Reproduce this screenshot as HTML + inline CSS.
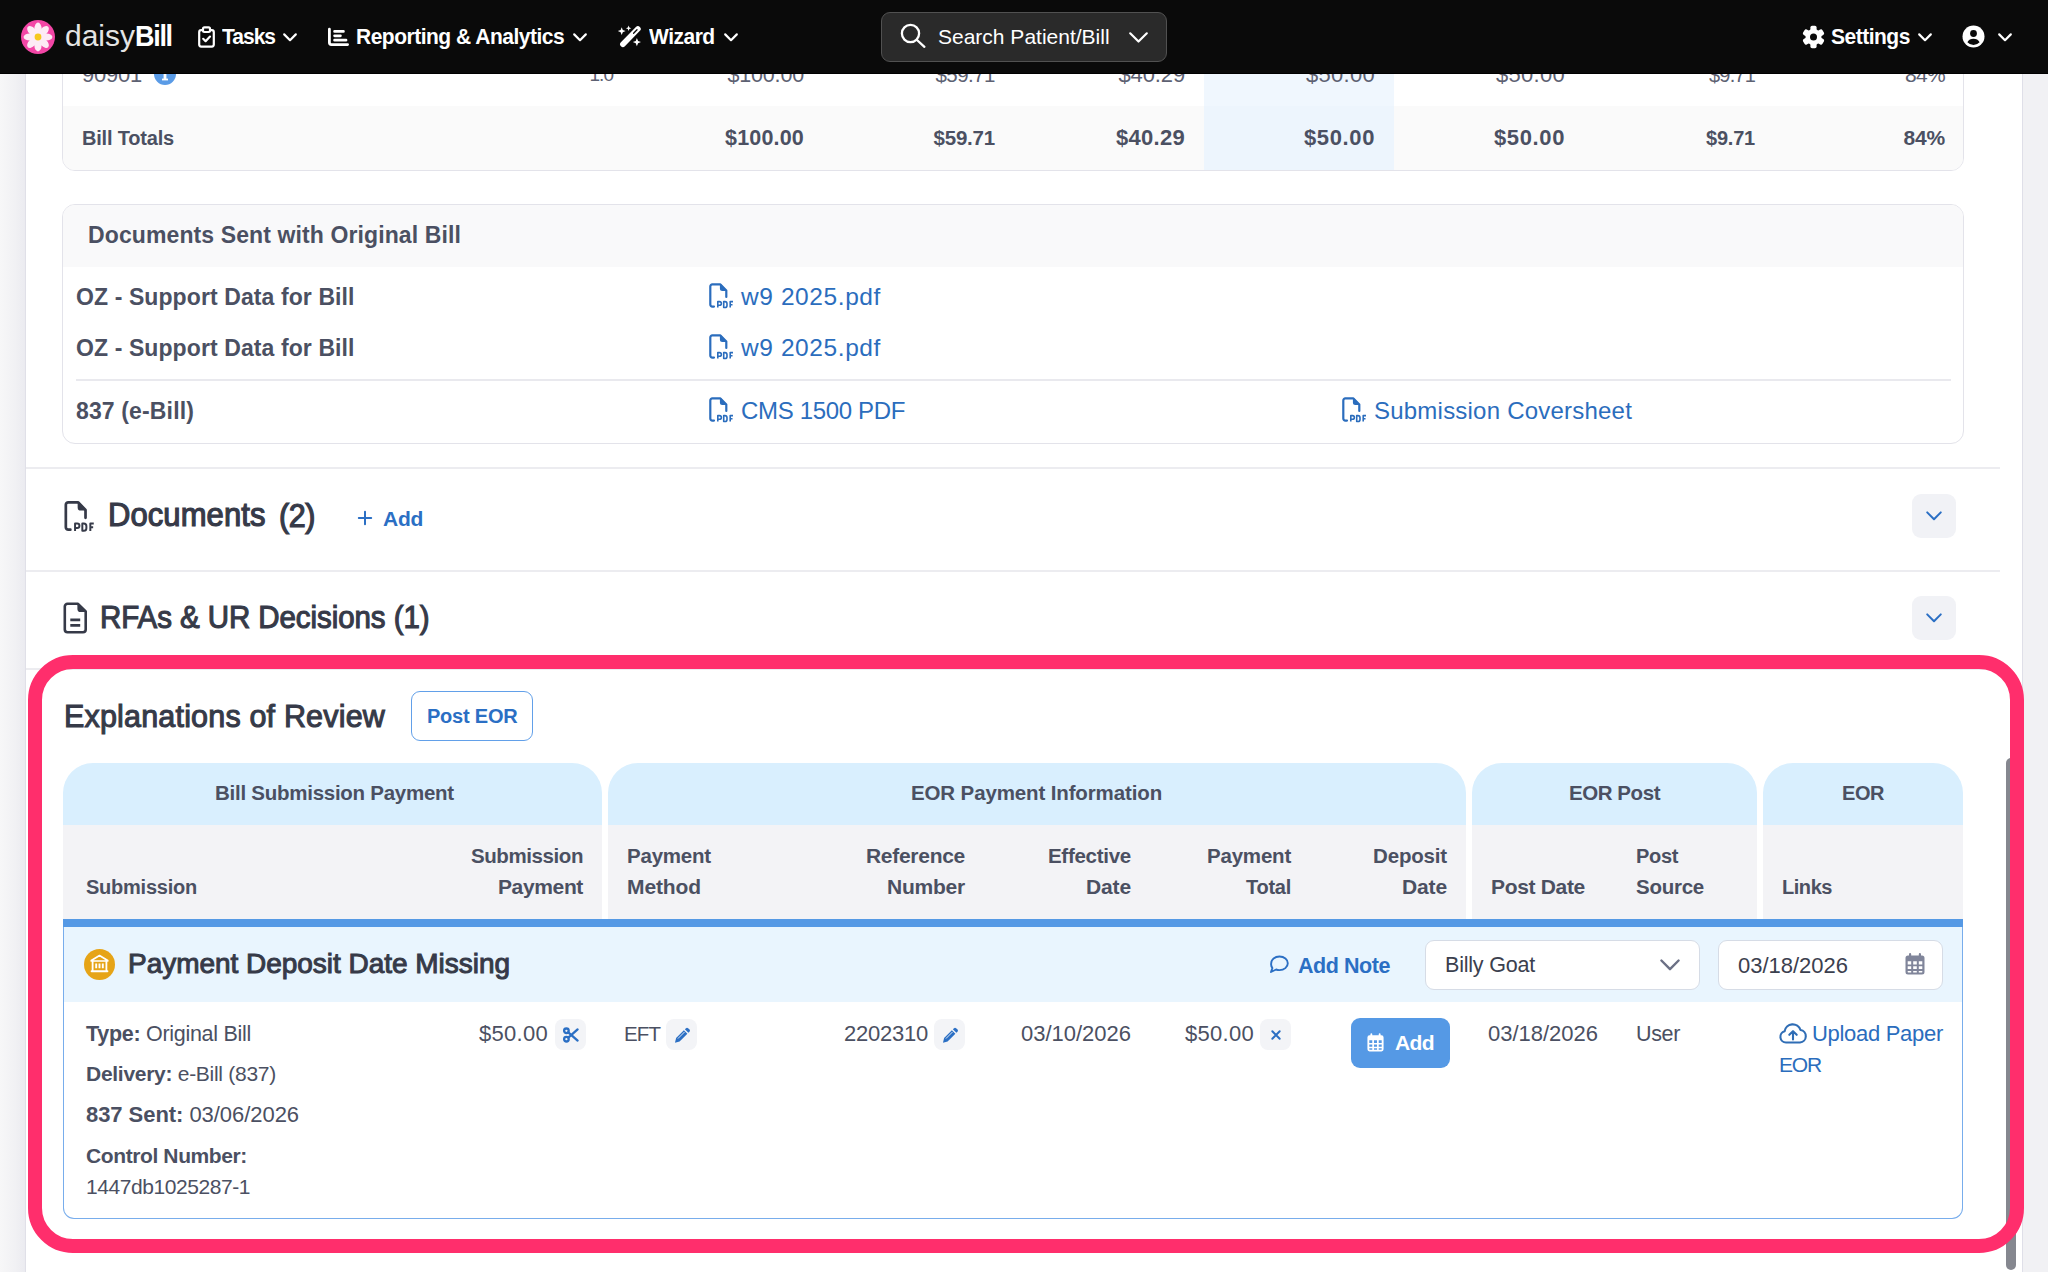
<!DOCTYPE html>
<html lang="en">
<head>
<meta charset="utf-8">
<title>daisyBill - Explanations of Review</title>
<style>
*{box-sizing:border-box;margin:0;padding:0}
html,body{width:2048px;height:1272px;overflow:hidden}
body{font-family:"Liberation Sans",sans-serif;background:#f2f2f5;position:relative;color:#4b5062}
.abs{position:absolute}
.t{position:absolute;white-space:nowrap;line-height:30px;height:30px}
.b{font-weight:bold}
.r{text-align:right}
svg{display:block;position:absolute;overflow:visible}

/* page strips */
#lstrip{left:0;top:73px;width:26px;height:1199px;background:linear-gradient(90deg,#f7f7f8 0,#f1f1f4 60%,#ebebf0 100%);border-right:1px solid #e0e0e8}
#rstrip{left:2022px;top:73px;width:26px;height:1199px;background:#f1f1f4;border-left:1px solid #dfdfe8}
#panel{left:26px;top:73px;width:1996px;height:1199px;background:#fff}

/* nav */
#nav{left:0;top:0;width:2048px;height:74px;background:#0a0a0a;border-bottom:1px solid #000}
#nav .t{color:#fff}
.nb{font-weight:bold;font-size:21px;letter-spacing:-.5px;transform:scaleY(1.07);transform-origin:50% 74%}

/* cards */
.card{position:absolute;left:62px;width:1902px;border:1px solid #e3e3ea;background:#fff;overflow:hidden}
.hline{position:absolute;height:2px;background:#ececf0}
.lnk{color:#2f6db5}
.chev{position:absolute;left:1912px;width:44px;height:44px;border-radius:9px;background:#f1f2f6}

.tb{font-weight:bold;font-size:21px;color:#4b5062}
.dh{font-weight:bold;font-size:23px;color:#4b5062}
.dl{font-weight:bold;font-size:23px;color:#4b5062}
.lk{font-size:24px;color:#2b6dbd}
.pdf{color:#2b6dbd}
.sh1{transform:scaleY(1.13);transform-origin:50% 62%;font-weight:normal;-webkit-text-stroke:1.15px #363a48;font-size:30px;color:#363a48;line-height:40px;height:40px}
.sh2{transform:scaleY(1.1);transform-origin:50% 62%;font-weight:normal;-webkit-text-stroke:1.05px #363a48;font-size:28px;color:#363a48;line-height:38px;height:38px}
.lk2{font-size:23px;color:#2b6dbd}
/* EOR */
.gh{position:absolute;top:763px;height:62px;background:#d9effe;border-radius:30px 30px 0 0}
.sh{position:absolute;top:825px;height:93.500px;background:#f3f3f6}
.th{font-weight:bold;font-size:21px;color:#4b5062}
.td{font-size:22px;color:#4b5062}
.ib{position:absolute;width:31px;height:31px;border-radius:8px;background:#f3f4f7}
</style>
</head>
<body>
<svg width="0" height="0" style="position:absolute"><defs>
<g id="pdfi" fill="none" stroke="currentColor" stroke-linecap="round" stroke-linejoin="round">
<path stroke-width="2.200" d="M6 24.600H4.300a2 2 0 0 1-2-2V4.400a2 2 0 0 1 2-2H12.400L18.300 8.600V15"/>
<path stroke-width="1.400" d="M12.600 2.800V6.600a1.800 1.800 0 0 0 1.800 1.800H17.800z" fill="currentColor"/>
<path stroke-width="1.600" d="M9.800 25.600V19.600H11.500a1.850 1.850 0 0 1 0 3.700H9.800M15.700 19.600V25.500H16.900a2.100 2.100 0 0 0 2.100-2.100V21.700a2.100 2.100 0 0 0-2.100-2.100zM22.200 25.600V19.600H25M22.200 22.700H24.500" stroke-linecap="butt"/>
</g>
<g id="cal" fill="currentColor"><path fill-rule="evenodd" d="M4 2.500V1.200a1.100 1.100 0 0 1 2.200 0V2.500H13.800V1.200a1.100 1.100 0 0 1 2.200 0V2.500H17a2.500 2.500 0 0 1 2.500 2.500V19A2.500 2.500 0 0 1 17 21.500H3A2.500 2.500 0 0 1 .5 19V5A2.500 2.500 0 0 1 3 2.500zM2.700 8.300v3.200h3.500V8.300zM8.200 8.300v3.200h3.600V8.300zM13.800 8.300v3.200h3.500V8.300zM2.700 13.300v2.800h3.500v-2.800zM8.200 13.300v2.800h3.600v-2.800zM13.800 13.300v2.800h3.500v-2.800zM2.700 17.900V19a.4.400 0 0 0 .4.400H6.200V17.900zM8.200 17.900v1.500h3.600V17.900zM13.800 17.900v1.500H17a.4.400 0 0 0 .3-.4V17.900z"/></g>
<g id="pen"><path fill="#2b6fc4" d="M9.900 3.300l3.500 3.500L5.600 14.600 1 15.700 2.100 11.100z"/><path fill="#2b6fc4" d="M10.900 2.300l1.100-1.100a1.500 1.500 0 0 1 2.100 0l1.400 1.400a1.500 1.500 0 0 1 0 2.100L14.400 5.800z"/><path d="M4.200 11.300L10.300 5.200" stroke="#f3f4f7" stroke-width=".9" stroke-linecap="round"/></g>
</defs></svg>
<div class="abs" id="panel"></div>
<div class="abs" id="lstrip"></div>
<div class="abs" id="rstrip"></div>

<!-- bill totals card -->
<div class="card" style="top:40px;height:131px;border-radius:0 0 13px 13px">
  <div class="abs" style="left:0;top:65px;width:1902px;height:65px;background:#fafafa"></div>
  <div class="abs" style="left:1141px;top:0;width:190px;height:65px;background:#f0f7fe"></div>
  <div class="abs" style="left:1141px;top:65px;width:190px;height:65px;background:#edf5fd"></div>
</div>
<!-- row 1 (partially hidden under nav) -->
<div class="t td" id="c_code" style="left:82px;top:60px;color:#5d6172;font-size:22px;letter-spacing:-0.24px">90901</div>
<svg style="left:154px;top:63px" width="22" height="22" viewBox="0 0 22 22"><circle cx="11" cy="11" r="11" fill="#5a9be6"/><rect x="9.600" y="9" width="2.800" height="7.500" fill="#fff"/><rect x="8" y="15.600" width="6" height="1.800" fill="#fff"/></svg>
<div class="t td r" id="c_r1a" style="right:1435px;top:60px;color:#5d6172;font-size:19px;letter-spacing:-0.97px">1.0</div>
<div class="t td r" id="c_r1b" style="right:1244px;top:60px;color:#5d6172;font-size:21.5px;letter-spacing:-0.17px">$100.00</div>
<div class="t td r" id="c_r1c" style="right:1053px;top:60px;color:#5d6172;font-size:20.5px;letter-spacing:-0.53px">$59.71</div>
<div class="t td r" id="c_r1d" style="right:863px;top:60px;color:#5d6172;font-size:22px;letter-spacing:-0.13px">$40.29</div>
<div class="t td r" id="c_r1e" style="right:673px;top:60px;color:#5d6172;font-size:22px;letter-spacing:0.28px">$50.00</div>
<div class="t td r" id="c_r1f" style="right:483px;top:60px;color:#5d6172;font-size:22px;letter-spacing:0.28px">$50.00</div>
<div class="t td r" id="c_r1g" style="right:293px;top:60px;color:#5d6172;font-size:20px;letter-spacing:-0.81px">$9.71</div>
<div class="t td r" id="c_r1h" style="right:103px;top:60px;color:#5d6172;font-size:21px;letter-spacing:-0.68px">84%</div>
<!-- row 2 -->
<div class="t tb" id="c_bt" style="left:82px;top:123px;font-size:20px;letter-spacing:-0.19px">Bill Totals</div>
<div class="t tb r" id="c_r2b" style="right:1244px;top:123px;font-size:21.5px;letter-spacing:0.18px">$100.00</div>
<div class="t tb r" id="c_r2c" style="right:1053px;top:123px;font-size:20.5px;letter-spacing:-0.2px">$59.71</div>
<div class="t tb r" id="c_r2d" style="right:863px;top:123px;font-size:22px;letter-spacing:0.28px">$40.29</div>
<div class="t tb r" id="c_r2e" style="right:673px;top:123px;font-size:22px;letter-spacing:0.62px">$50.00</div>
<div class="t tb r" id="c_r2f" style="right:483px;top:123px;font-size:22px;letter-spacing:0.62px">$50.00</div>
<div class="t tb r" id="c_r2g" style="right:293px;top:123px;font-size:20px;letter-spacing:-0.21px">$9.71</div>
<div class="t tb r" id="c_r2h" style="right:103px;top:123px;font-size:21px;letter-spacing:-0.18px">84%</div>

<!-- documents sent card -->
<div class="card" style="top:204px;height:240px;border-radius:13px">
  <div class="abs" style="left:0;top:0;width:1902px;height:62px;background:#f9f9fa"></div>
  <div class="abs" style="left:13px;top:174px;width:1875px;height:2px;background:#e9e9ee"></div>
</div>
<div class="t dh" id="d_h" style="left:88px;top:220px;font-size:23px;letter-spacing:0.11px">Documents Sent with Original Bill</div>
<div class="t dl" id="d_1" style="left:76px;top:282px;font-size:23px;letter-spacing:0.1px">OZ - Support Data for Bill</div>
<div class="t dl" id="d_2" style="left:76px;top:333px;font-size:23px;letter-spacing:0.1px">OZ - Support Data for Bill</div>
<div class="t dl" id="d_3" style="left:76px;top:396px;font-size:23px;letter-spacing:0.14px">837 (e-Bill)</div>
<svg class="pdf" style="left:708px;top:282px" width="26" height="27" viewBox="0 0 26 27"><use href="#pdfi"/></svg>
<svg class="pdf" style="left:708px;top:333px" width="26" height="27" viewBox="0 0 26 27"><use href="#pdfi"/></svg>
<svg class="pdf" style="left:708px;top:396px" width="26" height="27" viewBox="0 0 26 27"><use href="#pdfi"/></svg>
<svg class="pdf" style="left:1341px;top:396px" width="26" height="27" viewBox="0 0 26 27"><use href="#pdfi"/></svg>
<div class="t lk" id="d_l1" style="left:741px;top:282px;font-size:24.5px;letter-spacing:0.59px">w9 2025.pdf</div>
<div class="t lk" id="d_l2" style="left:741px;top:333px;font-size:24.5px;letter-spacing:0.59px">w9 2025.pdf</div>
<div class="t lk" id="d_l3" style="left:741px;top:396px;font-size:24px;letter-spacing:-0.34px">CMS 1500 PDF</div>
<div class="t lk" id="d_l4" style="left:1374px;top:396px;font-size:24px;letter-spacing:0.22px">Submission Coversheet</div>

<!--CARDS-->

<div class="hline" style="left:26px;top:467px;width:1974px"></div>
<svg style="left:63px;top:499px;color:#363a48" width="32" height="34" viewBox="0 0 26 27"><use href="#pdfi"/></svg>
<div class="t sh1" id="s_doc" style="left:108px;top:496px;font-size:31px;letter-spacing:0.08px;transform:scaleY(1.08)">Documents</div>
<div class="t sh1" id="s_doc2" style="left:279px;top:496px;font-size:30.5px;letter-spacing:-0.4px;transform:scaleY(1.08)">(2)</div>
<svg style="left:358px;top:511px" width="14" height="14" viewBox="0 0 14 14" stroke="#2b6fc4" stroke-width="2" stroke-linecap="round"><path d="M7 .8V13.200M.8 7H13.200"/></svg>
<div class="t b" id="s_add" style="left:383px;top:504px;color:#2b6fc4;font-size:21px;letter-spacing:-0.28px">Add</div>
<div class="chev" style="top:494px"><svg style="left:14px;top:17px" width="16" height="10" viewBox="0 0 16 10" fill="none" stroke="#2b6fc4" stroke-width="2" stroke-linecap="round" stroke-linejoin="round"><path d="M1.200 1.400L8 8.200l6.800-6.800"/></svg></div>

<div class="hline" style="left:26px;top:570px;width:1974px"></div>
<svg style="left:63px;top:602px" width="25" height="32" viewBox="0 0 25 32" fill="none" stroke="#363a48" stroke-width="2.600" stroke-linecap="round" stroke-linejoin="round">
  <path d="M15 1.800H4.500A2.700 2.700 0 0 0 1.800 4.500V27.500a2.700 2.700 0 0 0 2.700 2.700H20a2.700 2.700 0 0 0 2.700-2.700V9.500z"/>
  <path d="M15.200 2.200V7a2.300 2.300 0 0 0 2.300 2.300H22.300z" fill="#363a48" stroke-width="1.600"/>
  <path d="M7.300 17.800H17.200M7.300 23.300H17.200" stroke-width="2.800" stroke-linecap="butt"/>
</svg>
<div class="t sh2" id="s_rfa" style="left:100px;top:599px;font-size:29.5px;letter-spacing:-0.07px;transform:scaleY(1.04)">RFAs &amp; UR Decisions (1)</div>
<div class="chev" style="top:596px"><svg style="left:14px;top:17px" width="16" height="10" viewBox="0 0 16 10" fill="none" stroke="#2b6fc4" stroke-width="2" stroke-linecap="round" stroke-linejoin="round"><path d="M1.200 1.400L8 8.200l6.800-6.800"/></svg></div>
<div class="hline" style="left:26px;top:668px;width:1974px"></div>

<!--SECTIONS-->

<!-- scrollbar thumb -->
<div class="abs" style="left:2006px;top:758px;width:10px;height:512px;border-radius:5px;background:#85878f"></div>
<!-- pink highlight frame -->
<div class="abs" style="left:28px;top:655px;width:1996px;height:598px;border:14px solid #ff2e6c;border-radius:45px"></div>

<div class="t sh2" id="e_title" style="left:64px;top:697px;font-size:30.5px;letter-spacing:0.18px;transform:none">Explanations of Review</div>
<div class="abs" style="left:411px;top:691px;width:122px;height:50px;border:1.5px solid #62a0e9;border-radius:9px;background:#fff"></div>
<div class="t b" id="e_post" style="left:427px;top:701px;color:#2b6fc4;font-size:20px;letter-spacing:-0.22px">Post EOR</div>

<!-- group header -->
<div class="gh" style="left:63px;width:539px"></div>
<div class="gh" style="left:608px;width:858px"></div>
<div class="gh" style="left:1472px;width:285px"></div>
<div class="gh" style="left:1763px;width:200px"></div>
<div class="sh" style="left:63px;width:539px"></div>
<div class="sh" style="left:608px;width:858px"></div>
<div class="sh" style="left:1472px;width:285px"></div>
<div class="sh" style="left:1763px;width:200px"></div>
<div class="t th" id="g_1" style="left:215px;top:778px;font-size:20.5px;letter-spacing:-0.26px">Bill Submission Payment</div>
<div class="t th" id="g_2" style="left:911px;top:778px;font-size:20.5px;letter-spacing:-0.13px">EOR Payment Information</div>
<div class="t th" id="g_3" style="left:1569px;top:778px;font-size:20.5px;letter-spacing:-0.44px">EOR Post</div>
<div class="t th" id="g_4" style="left:1842px;top:778px;font-size:20px;letter-spacing:-0.45px">EOR</div>

<!-- sub header -->
<div class="t th" id="h_sub" style="left:86px;top:872px;font-size:20px;letter-spacing:-0.24px">Submission</div>
<div class="t th r" id="h_sp1" style="right:1465px;top:841px;font-size:20.5px;letter-spacing:-0.42px">Submission</div>
<div class="t th r" id="h_sp2" style="right:1465px;top:872px;font-size:21px;letter-spacing:-0.36px">Payment</div>
<div class="t th" id="h_pm1" style="left:627px;top:841px;font-size:20.5px;letter-spacing:-0.21px">Payment</div>
<div class="t th" id="h_pm2" style="left:627px;top:872px;font-size:21px;letter-spacing:-0.11px">Method</div>
<div class="t th r" id="h_rn1" style="right:1083px;top:841px;font-size:21px;letter-spacing:-0.28px">Reference</div>
<div class="t th r" id="h_rn2" style="right:1083px;top:872px;font-size:21px;letter-spacing:-0.23px">Number</div>
<div class="t th r" id="h_ed1" style="right:917px;top:841px;font-size:20.5px;letter-spacing:-0.27px">Effective</div>
<div class="t th r" id="h_ed2" style="right:917px;top:872px;font-size:21px;letter-spacing:-0.13px">Date</div>
<div class="t th r" id="h_pt1" style="right:757px;top:841px;font-size:20.5px;letter-spacing:-0.21px">Payment</div>
<div class="t th r" id="h_pt2" style="right:757px;top:872px;font-size:20px;letter-spacing:-0.26px">Total</div>
<div class="t th r" id="h_dd1" style="right:601px;top:841px;font-size:20.5px;letter-spacing:-0.17px">Deposit</div>
<div class="t th r" id="h_dd2" style="right:601px;top:872px;font-size:21px;letter-spacing:-0.13px">Date</div>
<div class="t th" id="h_pd" style="left:1491px;top:872px;font-size:21px;letter-spacing:-0.32px">Post Date</div>
<div class="t th" id="h_ps1" style="left:1636px;top:841px;font-size:20px;letter-spacing:-0.34px">Post</div>
<div class="t th" id="h_ps2" style="left:1636px;top:872px;font-size:20.5px;letter-spacing:-0.25px">Source</div>
<div class="t th" id="h_lk" style="left:1782px;top:872px;font-size:20px;letter-spacing:-0.45px">Links</div>

<!-- body -->
<div class="abs" style="left:63px;top:920px;width:1900px;height:299px;border:1px solid #78adec;border-top:none;border-radius:0 0 11px 11px;background:#fff"></div>
<div class="abs" style="left:64px;top:927px;width:1898px;height:75.400px;background:#e9f5fe"></div>
<div class="abs" style="left:63px;top:918.500px;width:1900px;height:8.500px;background:#5599e5"></div>

<!-- title row -->
<svg style="left:84px;top:949px" width="31" height="31" viewBox="0 0 31 31">
  <circle cx="15.500" cy="15.500" r="15.500" fill="#e6a417"/>
  <g fill="none" stroke="#fff" stroke-width="1.700" stroke-linejoin="round" stroke-linecap="round">
    <path d="M7.300 11.400L15.500 6.600l8.200 4.800v.6H7.300z"/>
    <path d="M8.600 12.600v8.600M22.400 12.600v8.600" stroke-width="1.800"/>
    <path d="M12.200 14.600v4.600M15.500 14.600v4.600M18.800 14.600v4.600" stroke-width="1.900" stroke-linecap="butt"/>
    <path d="M7.600 22.300H23.400" stroke-width="2"/>
  </g>
</svg>
<div class="t" id="r_title" style="-webkit-text-stroke:1px #363a48;left:128px;top:947px;color:#363a48;line-height:34px;height:34px;font-size:28px;letter-spacing:-0.03px;">Payment Deposit Date Missing</div>

<svg style="left:1269px;top:955px" width="20" height="19" viewBox="0 0 20 19" fill="none" stroke="#2b6fc4" stroke-width="1.900" stroke-linejoin="round"><path d="M10.500 1.500c4.700 0 8.300 3 8.300 6.800s-3.600 6.800-8.300 6.800a10 10 0 0 1-3.400-.6L2 17l1.400-4A6 6 0 0 1 2.200 8.300c0-3.800 3.600-6.800 8.300-6.800z"/></svg>
<div class="t b" id="r_note" style="left:1298px;top:951px;color:#2b6fc4;font-size:21.5px;letter-spacing:-0.44px">Add Note</div>

<div class="abs" style="left:1425px;top:940px;width:275px;height:50px;border:1px solid #d6dce6;border-radius:9px;background:#fff"></div>
<div class="t td" id="r_sel" style="left:1445px;top:950px;color:#3b404e;font-size:21.5px;letter-spacing:-0.2px">Billy Goat</div>
<svg style="left:1660px;top:959px" width="20" height="12" viewBox="0 0 20 12" fill="none" stroke="#6b7085" stroke-width="2.400" stroke-linecap="round" stroke-linejoin="round"><path d="M1.400 1.500l8.600 8.700 8.600-8.700"/></svg>

<div class="abs" style="left:1718px;top:940px;width:225px;height:50px;border:1px solid #d6dce6;border-radius:9px;background:#fff"></div>
<div class="t td" id="r_date" style="left:1738px;top:950.500px;color:#3b404e;font-size:22px;letter-spacing:-0.01px">03/18/2026</div>
<svg style="left:1905px;top:953px;color:#80859a" width="20" height="22" viewBox="0 0 20 22"><use href="#cal"/></svg>

<!-- data row -->
<div class="t td" id="b_1" style="left:86px;top:1019px;font-size:21.5px;letter-spacing:-0.29px"><b>Type:</b> Original Bill</div>
<div class="t td" id="b_2" style="left:86px;top:1059px;font-size:21px;letter-spacing:-0.28px"><b>Delivery:</b> e-Bill (837)</div>
<div class="t td" id="b_3" style="left:86px;top:1100px;font-size:22px;letter-spacing:-0.05px"><b>837 Sent:</b> 03/06/2026</div>
<div class="t td b" id="b_4" style="left:86px;top:1141px;font-size:21px;letter-spacing:-0.39px">Control Number:</div>
<div class="t td" id="b_5" style="left:86px;top:1172px;font-size:21px;letter-spacing:-0.43px">1447db1025287-1</div>

<div class="t td" id="b_amt" style="left:479px;top:1019px;font-size:22px;letter-spacing:0.28px">$50.00</div>
<div class="ib" style="left:555px;top:1019px"><svg style="left:8px;top:8px" width="16" height="16" viewBox="0 0 16 16" fill="none" stroke="#2b6fc4" stroke-width="2.300" stroke-linecap="round"><circle cx="3.400" cy="3.800" r="2.300"/><circle cx="3.400" cy="12.200" r="2.300"/><path d="M5.300 5.400L14.600 13.600M5.300 10.600L14.600 2.400"/></svg></div>
<div class="t td" id="b_eft" style="left:624px;top:1019px;font-size:20.5px;letter-spacing:-0.91px">EFT</div>
<div class="ib" style="left:666px;top:1019px"><svg style="left:8px;top:8px" width="16" height="17" viewBox="0 0 16 17"><use href="#pen"/></svg></div>
<div class="t td" id="b_ref" style="left:844px;top:1019px;font-size:22px;letter-spacing:-0.24px">2202310</div>
<div class="ib" style="left:934px;top:1019px"><svg style="left:8px;top:8px" width="16" height="17" viewBox="0 0 16 17"><use href="#pen"/></svg></div>
<div class="t td r" id="b_eff" style="right:917px;top:1019px;font-size:22px;letter-spacing:-0.01px">03/10/2026</div>
<div class="t td" id="b_tot" style="left:1185px;top:1019px;font-size:22px;letter-spacing:0.28px">$50.00</div>
<div class="ib" style="left:1260px;top:1019px"><svg style="left:10.500px;top:11px" width="10" height="10" viewBox="0 0 10 10" stroke="#2b6fc4" stroke-width="2" stroke-linecap="round"><path d="M1.300 1.300l7.400 7.400M8.700 1.300l-7.400 7.400"/></svg></div>

<div class="abs" style="left:1351px;top:1018px;width:99px;height:50px;border-radius:9px;background:#5599e5"></div>
<svg style="left:1367px;top:1033px;color:#fff" width="17" height="19" viewBox="0 0 20 22"><use href="#cal"/></svg>
<div class="t b" id="b_add" style="left:1395px;top:1028px;color:#fff;font-size:21px;letter-spacing:-0.61px">Add</div>

<div class="t td" id="b_pd" style="left:1488px;top:1019px;font-size:22px;letter-spacing:-0.01px">03/18/2026</div>
<div class="t td" id="b_user" style="left:1636px;top:1019px;font-size:21.5px;letter-spacing:-0.35px">User</div>
<svg style="left:1779px;top:1022px" width="28" height="22" viewBox="0 0 28 22" fill="none" stroke="#2f6db5" stroke-width="2.100" stroke-linecap="round" stroke-linejoin="round">
  <path d="M7.500 20.500H7A5.700 5.700 0 0 1 5.600 9.300 8.200 8.200 0 0 1 21.500 8 6.300 6.300 0 0 1 21 20.500H7.500z"/>
  <path d="M14 17.500V9.500M10.300 12.800L14 9.200l3.700 3.600"/>
</svg>
<div class="t lk2" id="b_up1" style="left:1812px;top:1019px;font-size:22px;letter-spacing:-0.3px">Upload Paper</div>
<div class="t lk2" id="b_up2" style="left:1779px;top:1050px;font-size:21px;letter-spacing:-1.17px">EOR</div>

<!--EOR-->

<div class="abs" id="nav">
  <!-- logo -->
  <svg style="left:21px;top:20px" width="34" height="34" viewBox="-17 -17 34 34">
    <circle r="17" fill="#f346a6"/>
    <g fill="#fdebf5">
      <ellipse rx="3.6" ry="6.2" cy="-8.2"/>
      <ellipse rx="3.6" ry="6.2" cy="-8.2" transform="rotate(45)"/>
      <ellipse rx="3.6" ry="6.2" cy="-8.2" transform="rotate(90)"/>
      <ellipse rx="3.6" ry="6.2" cy="-8.2" transform="rotate(135)"/>
      <ellipse rx="3.6" ry="6.2" cy="-8.2" transform="rotate(180)"/>
      <ellipse rx="3.6" ry="6.2" cy="-8.2" transform="rotate(225)"/>
      <ellipse rx="3.6" ry="6.2" cy="-8.2" transform="rotate(270)"/>
      <ellipse rx="3.6" ry="6.2" cy="-8.2" transform="rotate(315)"/>
    </g>
    <circle r="3.4" fill="#f6c81d"/>
  </svg>
  <div class="t" id="n_daisy" style="left:65px;top:21px;font-size:30px;color:#e4e4e4">daisy</div>
  <div class="t b" id="n_bill" style="left:135px;top:21px;font-size:27px;letter-spacing:-1.3px;line-height:32px;transform:scaleY(1.11);transform-origin:50% 76%">Bill</div>

  <!-- tasks -->
  <svg style="left:198px;top:26px" width="17" height="22" viewBox="0 0 17 22" fill="none" stroke="#fff" stroke-width="2.2" stroke-linecap="round" stroke-linejoin="round">
    <path d="M4.5 4.2H3.2A2 2 0 0 0 1.2 6.2V18.6a2 2 0 0 0 2 2H13.8a2 2 0 0 0 2-2V6.2a2 2 0 0 0-2-2H12.5"/>
    <rect x="5" y="1.4" width="7" height="4.6" rx="1.4" fill="#0a0a0a"/>
    <path d="M5.2 12.8l2.4 2.4 4.4-4.6"/>
  </svg>
  <div class="t nb" id="n_tasks" style="left:222px;top:22px;letter-spacing:-1px">Tasks</div>
  <svg style="left:283px;top:33px" width="14" height="9" viewBox="0 0 14 9" fill="none" stroke="#fff" stroke-width="2.2" stroke-linecap="round" stroke-linejoin="round"><path d="M1.2 1.4l5.8 5.8 5.8-5.8"/></svg>

  <!-- reporting -->
  <svg style="left:328px;top:28px" width="21" height="18" viewBox="0 0 21 18" fill="none" stroke="#fff" stroke-width="2.8" stroke-linecap="round" stroke-linejoin="round">
    <path d="M1.4 1.2V14.6a2 2 0 0 0 2 2H19.6"/>
    <path d="M6.6 3.4H15.4M6.6 7.8H12.4M6.6 12.2H18"/>
  </svg>
  <div class="t nb" id="n_rep" style="left:356px;top:22px">Reporting &amp; Analytics</div>
  <svg style="left:573px;top:33px" width="14" height="9" viewBox="0 0 14 9" fill="none" stroke="#fff" stroke-width="2.2" stroke-linecap="round" stroke-linejoin="round"><path d="M1.2 1.4l5.8 5.8 5.8-5.8"/></svg>

  <!-- wizard -->
  <svg style="left:618px;top:25px" width="24" height="24" viewBox="0 0 24 24">
    <path d="M4.900 19.300L19.900 3.900" stroke="#fff" stroke-width="5.600" stroke-linecap="round" fill="none"/>
    <path d="M15.600 8.300L19 4.800" stroke="#0a0a0a" stroke-width="1.300" stroke-linecap="round" fill="none"/>
    <path fill="#fff" d="M3.70 2.20L4.79 5.01L7.60 6.10L4.79 7.19L3.70 10.00L2.61 7.19L-0.20 6.10L2.61 5.01z"/>
    <path fill="#fff" d="M10.60 0.50L11.36 2.44L13.30 3.20L11.36 3.96L10.60 5.90L9.84 3.96L7.90 3.20L9.84 2.44z"/>
    <path fill="#fff" d="M18.90 13.00L20.05 15.95L23.00 17.10L20.05 18.25L18.90 21.20L17.75 18.25L14.80 17.10L17.75 15.95z"/>
  </svg>
  <div class="t nb" id="n_wiz" style="left:649px;top:22px">Wizard</div>
  <svg style="left:724px;top:33px" width="14" height="9" viewBox="0 0 14 9" fill="none" stroke="#fff" stroke-width="2.2" stroke-linecap="round" stroke-linejoin="round"><path d="M1.2 1.4l5.8 5.8 5.8-5.8"/></svg>

  <!-- search -->
  <div class="abs" style="left:881px;top:12px;width:286px;height:50px;background:#2a2a2a;border:1px solid #515151;border-radius:9px"></div>
  <svg style="left:900px;top:23px" width="26" height="25" viewBox="0 0 26 25" fill="none" stroke="#fff" stroke-width="2.300" stroke-linecap="round"><circle cx="10.500" cy="10.500" r="8.600"/><path d="M17 17l7.400 6.800"/></svg>
  <div class="t" id="n_search" style="left:938px;top:22px;font-size:21px">Search Patient/Bill</div>
  <svg style="left:1129px;top:32px" width="19" height="11" viewBox="0 0 19 11" fill="none" stroke="#fff" stroke-width="2.200" stroke-linecap="round" stroke-linejoin="round"><path d="M1.200 1.300l8.300 8.200 8.300-8.200"/></svg>

  <!-- settings -->
  <svg style="left:1802px;top:25px" width="23" height="24" viewBox="-11.500 -12 23 24">
    <g fill="#fff">
      <circle r="8"/>
      <rect x="-3.100" y="-11.200" width="6.200" height="22.400" rx="1.700"/>
      <rect x="-3.100" y="-11.200" width="6.200" height="22.400" rx="1.700" transform="rotate(60)"/>
      <rect x="-3.100" y="-11.200" width="6.200" height="22.400" rx="1.700" transform="rotate(120)"/>
    </g>
    <circle r="3.500" fill="#0a0a0a"/>
  </svg>
  <div class="t nb" id="n_set" style="left:1831px;top:22px">Settings</div>
  <svg style="left:1918px;top:33px" width="14" height="9" viewBox="0 0 14 9" fill="none" stroke="#fff" stroke-width="2.200" stroke-linecap="round" stroke-linejoin="round"><path d="M1.200 1.400l5.800 5.800 5.800-5.800"/></svg>

  <!-- user -->
  <svg style="left:1962px;top:25px" width="23" height="23" viewBox="0 0 23 23">
    <circle cx="11.500" cy="11.500" r="11" fill="#fff"/>
    <circle cx="11.500" cy="8.500" r="3.400" fill="#0a0a0a"/>
    <path d="M5.400 17.300c1.100-2.500 3.400-3.500 6.100-3.500s5 1 6.100 3.500a8.300 8.300 0 0 1-12.200 0z" fill="#0a0a0a"/>
  </svg>
  <svg style="left:1998px;top:33px" width="14" height="9" viewBox="0 0 14 9" fill="none" stroke="#fff" stroke-width="2.200" stroke-linecap="round" stroke-linejoin="round"><path d="M1.200 1.400l5.800 5.800 5.800-5.800"/></svg>
</div>

<!--NAV-->

</body>
</html>
